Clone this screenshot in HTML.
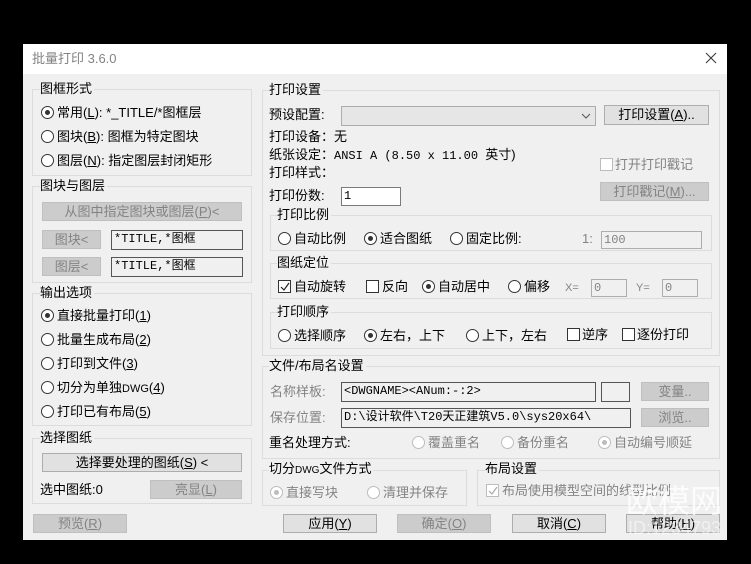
<!DOCTYPE html>
<html><head><meta charset="utf-8"><style>
*{margin:0;padding:0;box-sizing:border-box}
body{width:751px;height:564px;background:#000;position:relative;overflow:hidden;font-family:"Liberation Sans","Noto Sans CJK SC",sans-serif;font-size:13px;color:#000}
.a{position:absolute;white-space:nowrap;line-height:16px}
.dlg{position:absolute;left:23px;top:44px;width:704px;height:496px;background:#f0f0f0}
.tb{position:absolute;left:23px;top:44px;width:704px;height:30px;background:#fff}
.grp{position:absolute;border:1px solid #dcdcdc}
.lbl{position:absolute;background:#f0f0f0;padding-right:2px;line-height:16px;white-space:nowrap}
.btn{position:absolute;border:1px solid #adadad;background:#e1e1e1;text-align:center;line-height:17px;white-space:nowrap}
.dis{background:#cccccc;border-color:#bfbfbf;color:#838383}
.inp{position:absolute;border:1px solid #7a7a7a;background:#fff;line-height:17px;padding-left:2px;font-family:"Liberation Mono","Noto Sans CJK SC",monospace;font-size:12px;white-space:nowrap;overflow:hidden}
.inpd{background:#f0f0f0;border-color:#adadad;color:#838383}
.r{position:absolute;width:13px;height:13px;border:1px solid #333;border-radius:50%;background:#fff}
.r.on::after{content:"";position:absolute;left:3px;top:3px;width:5px;height:5px;border-radius:50%;background:#333}
.r.d{border-color:#bcbcbc}
.r.d.on::after{background:#bcbcbc}
.c{position:absolute;width:13px;height:13px;border:1px solid #333;background:#fff}
.c.d{border-color:#bcbcbc}
.g{color:#838383}
</style></head><body>
<div class="dlg"></div>
<div class="tb"></div>
<div class="a g" style="left:32px;top:51px;font-size:13px">批量打印 3.6.0</div>
<svg class="a" style="left:705px;top:52px" width="12" height="12"><path d="M1 1L11 11M11 1L1 11" stroke="#333" stroke-width="1"/></svg>

<div class="grp" style="left:32px;top:89px;width:220px;height:87px"></div>
<div class="lbl" style="left:40px;top:81px">图框形式</div>
<div class="r on" style="left:41px;top:106px"></div><div class="a" style="left:57px;top:105px">常用(<u>L</u>): *_TITLE/*图框层</div>
<div class="r" style="left:41px;top:130px"></div><div class="a" style="left:57px;top:129px">图块(<u>B</u>): 图框为特定图块</div>
<div class="r" style="left:41px;top:154px"></div><div class="a" style="left:57px;top:153px">图层(<u>N</u>): 指定图层封闭矩形</div>

<div class="grp" style="left:32px;top:186px;width:220px;height:97px"></div>
<div class="lbl" style="left:40px;top:178px">图块与图层</div>
<div class="btn dis" style="left:42px;top:202px;width:200px;height:19px">从图中指定图块或图层(<u>P</u>)&lt;</div>
<div class="btn dis" style="left:42px;top:230px;width:59px;height:19px">图块&lt;</div>
<div class="inp inpd" style="left:111px;top:230px;width:132px;height:20px;color:#000;background:#f0f0f0;border-color:#555">*TITLE,*图框</div>
<div class="btn dis" style="left:42px;top:257px;width:59px;height:19px">图层&lt;</div>
<div class="inp inpd" style="left:111px;top:257px;width:132px;height:20px;color:#000;background:#f0f0f0;border-color:#555">*TITLE,*图框</div>

<div class="grp" style="left:32px;top:293px;width:220px;height:133px"></div>
<div class="lbl" style="left:40px;top:285px">输出选项</div>
<div class="r on" style="left:41px;top:309px"></div><div class="a" style="left:57px;top:308px">直接批量打印(<u>1</u>)</div>
<div class="r" style="left:41px;top:333px"></div><div class="a" style="left:57px;top:332px">批量生成布局(<u>2</u>)</div>
<div class="r" style="left:41px;top:357px"></div><div class="a" style="left:57px;top:356px">打印到文件(<u>3</u>)</div>
<div class="r" style="left:41px;top:381px"></div><div class="a" style="left:57px;top:380px">切分为单独<span style="font-size:11px">DWG</span>(<u>4</u>)</div>
<div class="r" style="left:41px;top:405px"></div><div class="a" style="left:57px;top:404px">打印已有布局(<u>5</u>)</div>

<div class="grp" style="left:32px;top:438px;width:220px;height:66px"></div>
<div class="lbl" style="left:40px;top:430px">选择图纸</div>
<div class="btn" style="left:42px;top:453px;width:200px;height:19px">选择要处理的图纸(<u>S</u>) &lt;</div>
<div class="a" style="left:40px;top:482px">选中图纸:0</div>
<div class="btn dis" style="left:150px;top:480px;width:92px;height:19px">亮显(<u>L</u>)</div>
<div class="btn dis" style="left:33px;top:514px;width:94px;height:19px">预览(<u>R</u>)</div>

<div class="grp" style="left:262px;top:90px;width:458px;height:266px"></div>
<div class="lbl" style="left:269px;top:82px">打印设置</div>
<div class="a" style="left:269px;top:107px">预设配置:</div>
<div class="inp inpd" style="left:341px;top:106px;width:255px;height:20px;background:#e6e6e6"></div>
<svg class="a" style="left:581px;top:112px" width="10" height="8"><path d="M1 2L5 6L9 2" stroke="#555" fill="none"/></svg>
<div class="btn" style="left:604px;top:105px;width:105px;height:20px">打印设置(<u>A</u>)..</div>
<div class="a" style="left:269px;top:129px">打印设备：无</div>
<div class="a" style="left:269px;top:147px">纸张设定：<span style="font-family:'Liberation Mono',monospace;font-size:12px">ANSI A (8.50 x 11.00 </span>英寸)</div>
<div class="a" style="left:269px;top:165px">打印样式：</div>
<div class="c d" style="left:600px;top:158px"></div><div class="a g" style="left:615px;top:157px">打开打印戳记</div>
<div class="a" style="left:269px;top:188px">打印份数:</div>
<div class="inp" style="left:341px;top:187px;width:60px;height:19px">1</div>
<div class="btn dis" style="left:600px;top:182px;width:109px;height:19px">打印戳记(<u>M</u>)...</div>

<div class="grp" style="left:270px;top:215px;width:442px;height:36px"></div>
<div class="lbl" style="left:277px;top:207px">打印比例</div>
<div class="r" style="left:278px;top:232px"></div><div class="a" style="left:294px;top:231px">自动比例</div>
<div class="r on" style="left:364px;top:232px"></div><div class="a" style="left:380px;top:231px">适合图纸</div>
<div class="r" style="left:450px;top:232px"></div><div class="a" style="left:466px;top:231px">固定比例:</div>
<div class="a g" style="left:582px;top:231px">1:</div>
<div class="inp inpd" style="left:601px;top:231px;width:101px;height:18px">100</div>

<div class="grp" style="left:270px;top:263px;width:442px;height:36px"></div>
<div class="lbl" style="left:277px;top:255px">图纸定位</div>
<div class="c" style="left:278px;top:280px"></div>
<svg class="a" style="left:280px;top:282px" width="10" height="10"><path d="M1 5L4 8L9 1" stroke="#222" fill="none" stroke-width="1.2"/></svg>
<div class="a" style="left:294px;top:279px">自动旋转</div>
<div class="c" style="left:366px;top:280px"></div><div class="a" style="left:382px;top:279px">反向</div>
<div class="r on" style="left:422px;top:280px"></div><div class="a" style="left:438px;top:279px">自动居中</div>
<div class="r" style="left:508px;top:280px"></div><div class="a" style="left:524px;top:279px">偏移</div>
<div class="a g" style="left:565px;top:280px;font-size:11px">X=</div>
<div class="inp inpd" style="left:591px;top:279px;width:36px;height:18px">0</div>
<div class="a g" style="left:636px;top:280px;font-size:11px">Y=</div>
<div class="inp inpd" style="left:662px;top:279px;width:36px;height:18px">0</div>

<div class="grp" style="left:270px;top:312px;width:442px;height:37px"></div>
<div class="lbl" style="left:277px;top:304px">打印顺序</div>
<div class="r" style="left:278px;top:329px"></div><div class="a" style="left:294px;top:328px">选择顺序</div>
<div class="r on" style="left:364px;top:329px"></div><div class="a" style="left:380px;top:328px">左右，上下</div>
<div class="r" style="left:466px;top:329px"></div><div class="a" style="left:482px;top:328px">上下，左右</div>
<div class="c" style="left:567px;top:328px"></div><div class="a" style="left:582px;top:327px">逆序</div>
<div class="c" style="left:622px;top:328px"></div><div class="a" style="left:637px;top:327px">逐份打印</div>

<div class="grp" style="left:262px;top:366px;width:458px;height:93px"></div>
<div class="lbl" style="left:269px;top:358px">文件/布局名设置</div>
<div class="a g" style="left:270px;top:384px">名称样板:</div>
<div class="inp" style="left:341px;top:382px;width:255px;height:20px;background:#f0f0f0;border-color:#555">&lt;DWGNAME&gt;&lt;ANum:-:2&gt;</div>
<div class="inp" style="left:601px;top:382px;width:29px;height:20px;background:#f0f0f0;border-color:#555"></div>
<div class="btn dis" style="left:641px;top:382px;width:68px;height:19px">变量..</div>
<div class="a g" style="left:270px;top:410px">保存位置:</div>
<div class="inp" style="left:341px;top:408px;width:290px;height:20px;background:#f0f0f0;border-color:#555">D:\设计软件\T20天正建筑V5.0\sys20x64\</div>
<div class="btn dis" style="left:641px;top:408px;width:68px;height:19px">浏览..</div>
<div class="a" style="left:269px;top:435px">重名处理方式:</div>
<div class="r d" style="left:412px;top:436px"></div><div class="a g" style="left:428px;top:435px">覆盖重名</div>
<div class="r d" style="left:501px;top:436px"></div><div class="a g" style="left:517px;top:435px">备份重名</div>
<div class="r d on" style="left:598px;top:436px"></div><div class="a g" style="left:614px;top:435px">自动编号顺延</div>

<div class="grp" style="left:262px;top:470px;width:205px;height:36px"></div>
<div class="lbl" style="left:269px;top:461px">切分<span style="font-size:10px">DWG</span>文件方式</div>
<div class="r d on" style="left:270px;top:486px"></div><div class="a g" style="left:286px;top:485px">直接写块</div>
<div class="r d" style="left:367px;top:486px"></div><div class="a g" style="left:383px;top:485px">清理并保存</div>

<div class="grp" style="left:477px;top:470px;width:243px;height:36px"></div>
<div class="lbl" style="left:485px;top:461px">布局设置</div>
<div class="c d" style="left:486px;top:484px"></div>
<svg class="a" style="left:488px;top:486px" width="10" height="10"><path d="M1 5L4 8L9 1" stroke="#aaa" fill="none" stroke-width="1.2"/></svg>
<div class="a g" style="left:502px;top:483px">布局使用模型空间的线型比例</div>

<div class="btn" style="left:283px;top:514px;width:94px;height:19px">应用(<u>Y</u>)</div>
<div class="btn dis" style="left:397px;top:514px;width:94px;height:19px">确定(<u>O</u>)</div>
<div class="btn" style="left:512px;top:514px;width:94px;height:19px">取消(<u>C</u>)</div>
<div class="btn" style="left:626px;top:514px;width:94px;height:19px">帮助(<u>H</u>)</div>
<div class="a" style="left:626px;top:484px;font-size:32px;line-height:34px;color:rgba(255,255,255,0.8)">欧模网</div>
<div class="a" style="left:628px;top:518px;font-size:18px;line-height:20px;color:rgba(255,255,255,0.55)">ID:1234793</div>
</body></html>
